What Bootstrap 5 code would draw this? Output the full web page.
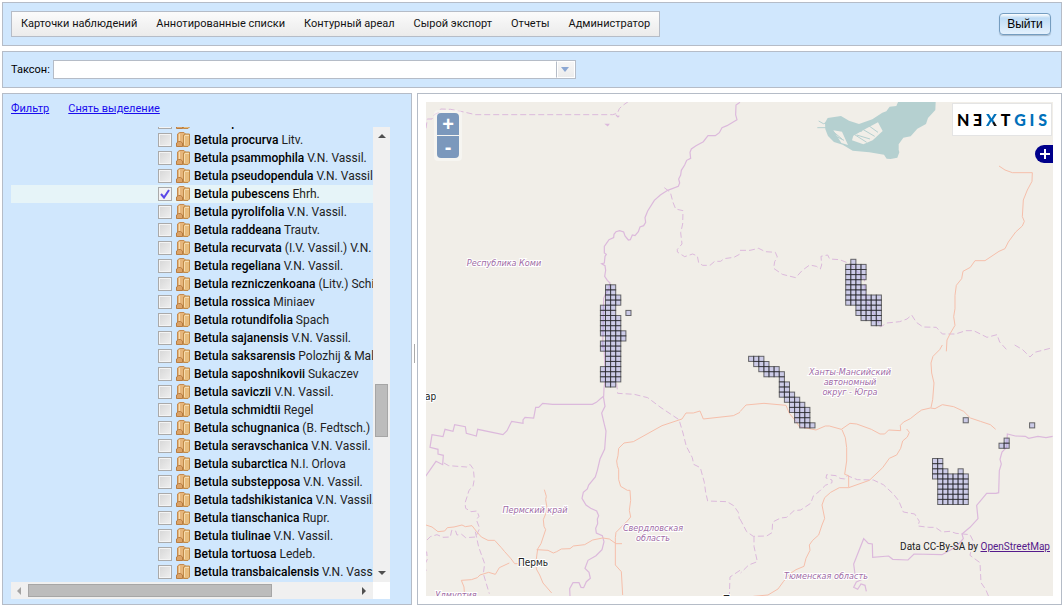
<!DOCTYPE html>
<html lang="ru">
<head>
<meta charset="utf-8">
<meta name="viewport" content="width=device-width, initial-scale=1">
<title>Карточки наблюдений</title>
<link href="https://cdn.jsdelivr.net/npm/bootstrap@5.3.0/dist/css/bootstrap.min.css" rel="stylesheet">
<style>
  :root { --line: #b5bcc7; --panel: #d0e7fd; }
  body { font: 12px/18px Roboto, "Liberation Sans", Arial, sans-serif; color: #000; background: #fff; padding: 2px; gap: 5px; }
  .pane { border: 1px solid var(--line); padding: 8px; background: var(--panel); }
  .menu-bar, .side-links, .taxon-row { font-size: 11px; }
  .menu-bar { border: 1px solid var(--line); height: 26px; background: linear-gradient(#fbfbfb, #ebebeb); padding: 0 1px; }
  .menu-bar a { color: #131313; padding: 3px 8px 3px; margin-right: 3px; text-decoration: none; white-space: nowrap; }
  .menu-bar a:last-child { margin-right: 0; }
  .exit-btn { height: 22px; width: 52px; margin-right: 2px; padding: 0; border: 1px solid #759dc0; border-radius: 4px; background: linear-gradient(#fff 0, #bfdcf5 4px, #e4f1fd 100%); box-shadow: 0 1px 1px rgba(0,0,0,.2); font-family: "Liberation Sans", Arial, sans-serif; line-height: 18px; color: #000; }
  .taxon-row { gap: 3px; }
  .taxon-box { width: 523px; height: 19px; border: 1px solid var(--line); background: #fff; }
  .taxon-box input { border: 0; outline: 0; padding: 0 3px; min-width: 0; background: none; }
  .taxon-box button { width: 19px; border: 1px solid #fff; border-left: 1px solid var(--line); padding: 0; background: linear-gradient(#f6f6f6, #ececec); box-shadow: inset 1px 0 #fff; }
  .side { width: 410px; padding-bottom: 5px; }
  .side a { color: #1a0dee; }
  .side-links { line-height: 14px; gap: 19px; }
  .tree-box { margin-top: 11px; width: 379px; display: grid; grid-template: minmax(0, 1fr) 17px / minmax(0, 1fr) 17px; min-height: 300px; height: 0; }
  .tree { overflow: hidden; }
  .tree ul { margin: -14px 0 0; }
  .tree li { height: 18px; padding-left: 147px; white-space: nowrap; }
  .tree li.chosen { background: #e6f4f8; }
  .tree label { color: #222; margin-left: 4px; }
  .tree b { color: #000; font-weight: 500; }
  .tree input { appearance: none; margin: 2px 4px 2px 0; width: 14px; height: 14px; flex: none; border: 1px solid #aaa; box-shadow: inset 0 0 0 1px #f4f4f4; background: linear-gradient(135deg, #d6d6d6, #f0f0f0); }
  .tree input:checked { background: url("data:image/svg+xml,%3Csvg xmlns='http://www.w3.org/2000/svg' viewBox='0 0 12 12'%3E%3Cpath d='M2 6l3 3.5L10 2' fill='none' stroke='%235a48e8' stroke-width='2'/%3E%3C/svg%3E") center/12px #f2f2f2; }
  .tree svg { width: 14px; height: 16px; flex: none; }
  .bar { background: #f0f0f0; }
  .bar svg { width: 17px; height: 17px; flex: none; }
  .thumb { background: #bcbcbc; border: 1px solid #a6a6a6; }
  .thumb-v { width: 13px; height: 53px; }
  .thumb-h { height: 13px; width: 244px; }
  .grip { width: 1px; height: 19px; background: #aaa; }
  .split { width: 5px; padding-top: 8px; }
  .map-pane { background: #fff; min-width: 400px; }
  .map-view { background: #f1eee8; overflow: hidden; min-height: 300px; }
  .map-view > svg { position: absolute; width: 100%; height: 100%; }
  .border-line { fill: none; stroke: #dcb9dc; stroke-width: 1.2; }
  .dashed { stroke-dasharray: 6 3; stroke-width: 1; }
  .road { fill: none; stroke: #f6bfab; stroke-width: 1; }
  .map-view path { vector-effect: non-scaling-stroke; }
  .cell { fill: rgba(150,150,230,.4); stroke: #222; stroke-opacity: .65; }
  .region, .town { font: oblique 9px "DejaVu Sans Condensed", "DejaVu Sans", sans-serif; text-anchor: middle; fill: #a06ba5; stroke: #fff; stroke-width: 2px; paint-order: stroke; }
  .town { font-style: normal; font-size: 10px; fill: #222; }
  .zoom-box { position: absolute; left: 8px; top: 8px; padding: 3px; background: rgba(255,255,255,.4); border-radius: 4px; }
  .zoom-box button { display: block; width: 22px; height: 22px; border: 0; padding: 0; color: #fff; background: #7b98bc; font: bold 20px/20px "Liberation Sans", sans-serif; border-radius: 4px 4px 0 0; }
  .zoom-box button + button { margin-top: 1px; border-radius: 0 0 4px 4px; }
  .logo-box { position: absolute; right: 1px; top: 1px; width: 100px; height: 33px; padding: 0 4px; background: #fff; border: 1px solid #e4e4e4; font: 900 16px/32px Lato, sans-serif; }
  .logo-box .blue { color: #0070ba; }
  .logo-box .duo { background: linear-gradient(135deg, #0070ba 60%, #111 60%); background-clip: text; -webkit-background-clip: text; color: transparent; }
  .layers-btn { position: absolute; right: 0; top: 43px; width: 18px; height: 18px; border: 0; padding: 0; background: #00008b; border-radius: 9px 0 0 9px; }
  .layers-btn svg { display: block; }
  .credit { position: absolute; right: 3px; bottom: 40px; font-size: 10px; line-height: 18px; color: #222; }
  .credit a { color: #551a8b; }
</style>
</head>
<body class="d-flex flex-column min-vh-100">

<header class="pane d-flex justify-content-between align-items-center">
  <nav class="menu-bar d-flex align-items-center">
    <a href="#">Карточки наблюдений</a><a href="#">Аннотированные списки</a><a href="#">Контурный ареал</a><a href="#">Сырой экспорт</a><a href="#">Отчеты</a><a href="#">Администратор</a>
  </nav>
  <button type="button" class="exit-btn">Выйти</button>
</header>

<section class="pane taxon-row d-flex align-items-center">
  <label for="taxon">Таксон:</label>
  <div class="taxon-box d-flex">
    <input id="taxon" type="text" class="flex-grow-1">
    <button type="button" aria-label="Открыть список"><svg class="d-block mx-auto" width="8" height="5"><path d="M0 0h8L4 5z" fill="#8ba7d3"/></svg></button>
  </div>
</section>

<main class="d-flex flex-grow-1">
  <aside class="pane side d-flex flex-column flex-shrink-0">
    <div class="side-links d-flex"><a href="#">Фильтр</a><a href="#">Снять выделение</a></div>
    <div class="tree-box flex-grow-1">
      <div class="tree"><ul class="list-unstyled" id="tree"></ul></div>
      <div class="bar d-flex flex-column align-items-center">
        <svg><path d="M5 11l4-4 4 4z" fill="#505050"/></svg>
        <div style="flex: 240 0 0"></div><div class="thumb thumb-v"></div><div style="flex: 128 0 0"></div>
        <svg><path d="M5 6h8l-4 4z" fill="#505050"/></svg>
      </div>
      <div class="bar d-flex align-items-center">
        <svg><path d="M10 5v8L6 9z" fill="#a3a3a3"/></svg>
        <div class="thumb thumb-h"></div>
        <svg class="ms-auto"><path d="M6 5v8l4-4z" fill="#505050"/></svg>
      </div>
      <div class="bg-white"></div>
    </div>
  </aside>

  <div class="split d-flex align-items-center justify-content-center"><div class="grip"></div></div>

  <section class="pane map-pane d-flex flex-grow-1">
    <div class="map-view position-relative flex-grow-1">
      <svg viewBox="426 102 627 494" preserveAspectRatio="xMidYMid slice" role="img" aria-label="Карта">
        <!-- north-west -->
        <g transform="translate(420 95) scale(.33333)">
          <path class="border-line dashed" d="M18 100l4-28 14 0 8-14 10-4 8-12 30 1 40 8 34 8h412l14-4 6-14 8-8 20-14 24-16"/>
          <path class="border-line" d="M960 22l-12 8-1 30 4 14-30 18-15 6-8 15-12 9h-22l-14 18-22 12-14 10-4 10 2 18-12 6-6 14-10 16-2 14-6 12 3 12-4 10-32 12-22 14-18 16-20 32-8 20 2 14-6 10-11 4-5 14-10 12-8-2-6 14-6 1-10-12-4-12-12-4-11 3-6 8-1 10-14 6-14 20 0 20 6 4-4 6-2 20-8 2 10 6 2 14-3 18 8 12 8 8-3 16-10 16-6 14-3 150"/>
          <path class="border-line dashed" d="M733 278l18 14 8 30 8 20 22 5-1 40-6 26 4 34-14 16 0 8 22 14 24-8 14 6 4 20 12 8 22 0 14-12h18l10-8 30-4 18-10"/>
          <path class="border-line" d="M558 88h8l-3 4zM588 60l6 6 4-4"/>
        </g>
        <!-- north-east -->
        <g transform="translate(740 95) scale(.33333)">
          <path d="M470 21h117l-1 24-22 24-6 18-26 14-20 23-22 4-14 20 0 16 2 8-6 16-20 4-12-1-8-12-44-7-50-5-30-18-26-8-18-18-8-20-1-20 8-14 40-6 24 14 30 10 40-14 30-20 12-4 10-14 20-2 6-14 10-14-3-14 14-10z" fill="#b5d0d0"/>
          <path d="M340 122l40-22 34-18 14 26-30 28-28 12-34-12zM280 106l26 4 18 40-20-6z" fill="#f1eee8"/>
          <path d="M232 98h30l20 14 24 20M236 78l14 8 24-6 14 16M262 82l10 34 40 20M290 94l28 4 14 14 34-4M350 120l40 12M370 104l34 20M386 92l28 20M330 110l50 32" fill="none" stroke="#b5d0d0"/>
          <path class="border-line dashed" d="M0 466h30l26-6 20 10 30 2 6 14-8 14-3 20 26 18 40 10 20-22 22-16 20 4 12 8 4-12-2-26 20-4 6 12 30 2 30 12 44 46 4 60 34 60 10 24 20-12 38-4 22-8 14-12 14 22 20 14 40 1 18 20h40l30-10 24 0 40 20 30-8 8 22 20 22"/>
          <path class="road" d="M777 213l18 12 22 8h60l-1 26-14 26-12 30-3 50 6 14-6 14-20 18-22 30-10 20-18 8-42 28h-30l-14 20-22 12-4 22-16 20-4 30v40l-4 24 4 26-14 24-10 20-2 34"/>
        </g>
        <!-- south-west -->
        <g transform="translate(420 345) scale(.33333)">
          <path class="border-line" d="M552 0l4 100-4 30-1 24-8 6-14 12-12 6H398l-30-3-12 12h-9l-6 32-26-2-6 8v10l-34-6-14 28-12 12-76-16-4 20-30-8-3-20-32-6-5 20-24-6-6 22-33-6-6 38 24 6v14l16 4-2 28-20-10-32 46"/>
          <path class="border-line dashed" d="M72 354l14 8 54 4 10-8 10 14 3 30-4 22-12 12-6 20-6 18 2 16 16 10 18-2 6 16-8 10 10 26-12 26-30 2-12-10-14 2-4-12-12-2-4 20-22 1-18-8-20 6-16 16-3 22 8 8 2 22-8 16 4 18-14 20-8 6M166 560l10 46 18 50-4 30 18 60"/>
          <path class="border-line" d="M550 154l5 30-10 20 8 34 5 20-4 54-14 30-8 34-6 20-20 24-4 12-12 10-4 18 12 20 14 10 18 8 6 14-4 10 1 14-6 14 2 14 18 8 5 18-6 24-18 18-24 14-9 24 12 12 4 18-12 10-8 18-8-1-6-14-18 0-10 18 2 46"/>
          <path class="border-line dashed" d="M590 115l3 30 50 3 40 10 40 30 54 36 12 40 10 40 18 34 4 20 20 10 12 44 4 30 6 26 58 2 20 12 14 20 3 20M960 676l-30 20-2 56"/>
          <path class="road" d="M18 540l18 6 18 14 20-2 8-10 20-2 24-6 10 5 20-3 14 18 14 16 20 10h20l20 22 10 12 18 20 12 16h20M268 654l-30 14-12 20-20-6-26 8-8 8-18 6-30 2 8 20 2 30M373 434l6 20-2 10 5 30-12 30 2 20 5 10-14 42-10 16-4 30 0 30 10 18 10 24 26 30M350 614l34 2 16 8 10-4 14-8 26-1 10-8 34-4 24-14 30-6 20 3 20 14 18 0M960 202l-20 10-90 10-10-24-20 6-22 0-12 18-60 20-86 48-28 4-16 16-2 22-4 16 2 14 4 12 0 30 6 20 20 12h8l2 30-4 30 4 20-10 12-34 34-2 16v82l18 20 4 70"/>
        </g>
        <!-- south-east -->
        <g transform="translate(740 345) scale(.33333)">
          <path class="border-line dashed" d="M824 0l24 14 22 22 14-14 54-14M0 522l20 38 20 14 40-1 16-10 2-32 24-12 18-2 22-20 20-2 30-20 8-22 18-14 18-18 20-8 0-8-18-6 2-10 28 3 12 8 14 2 8-10 30 12 48 1 30 14 30 28 16 20 14 34 34 6 14 22-4 14 32 4h20l20 14 24-2 18 6 42 4 10 20-4 12-6 30 30 22 3 60 14 20 10 24 50 6M42 574l0 30 10 46-26 10-24 24"/>
          <path class="border-line" d="M938 274l-20 4-24-4-28 6-10-6-30-1-24-6-2 40-14 14-6 22 4 14-6 20-2 66-8 2-28 0-30 36 4 40-24 26-24 20 4 14-14 16-14 12-36 20-84-2-18 18-46-2-12-10-48 4-1-40-12-2-14-14-30 76 4 30 14 4 4 14-14 6-8 16 12 6 10-16 12 4 4 18"/>
          <path class="road" d="M0 200l18-20 54-5 66 6 10 24 20 24 10 16 30 6 20 4 28-12h12l36 10 26-18 20 2 44 16 26 14h14l12-12 36 2-1-16 10-10 20-10 20-16 14-10 26-6 14 2 22-12 34 6 30 14 20 20 30 10 30 10 16 14M607 0l-8 14-20 20-6 20 2 30 7 30-4 50-5 24M500 252l8 10-6 14-14 12-6 22-12 20-22 10-20 28-40 38-62 22-28 0-26 14-18 16-8 22 8 40-8 20-10 30-18 16-10 14 2 16-12 24-6 24-24 10-18 12-20 24-16 22-30 18-44 4M306 254l10 24 4 30v40l-6 40 12 4v35"/>
        </g>
        <g id="cells"></g>
        <g class="region" lang="ru">
          <text x="504" y="266">Республика Коми</text>
          <text x="850" y="375">Ханты-Мансийский</text>
          <text x="850" y="385">автономный</text>
          <text x="850" y="395">округ - Югра</text>
          <text x="535" y="513">Пермский край</text>
          <text x="653" y="531">Свердловская</text>
          <text x="653" y="541">область</text>
          <text x="826" y="579">Тюменская область</text>
          <text x="456" y="598">Удмуртия</text>
        </g>
        <text class="town" x="533" y="566">Пермь</text>
        <text class="town" x="428" y="400">кар</text>
        <text class="town" x="742" y="603">Тюмень</text>
      </svg>
      <div class="zoom-box"><button type="button">+</button><button type="button">-</button></div>
      <div class="logo-box d-flex justify-content-between"><span>N</span><span>Ǝ</span><span class="duo">X</span><span>T</span><span class="blue">G</span><span class="blue">I</span><span class="blue">S</span></div>
      <button type="button" class="layers-btn" aria-label="Слои"><svg width="18" height="18"><path d="M5 9h10M10 4v10" stroke="#fff" stroke-width="2"/></svg></button>
      <div class="credit">Data CC-By-SA by <a href="#">OpenStreetMap</a></div>
    </div>
  </section>
</main>

<script src="https://cdn.jsdelivr.net/npm/bootstrap@5.3.0/dist/js/bootstrap.bundle.min.js"></script>
<script>
  const species = [
    ["potaninii", "Batalin"], ["procurva", "Litv."], ["psammophila", "V.N. Vassil."], ["pseudopendula", "V.N. Vassil."],
    ["pubescens", "Ehrh."], ["pyrolifolia", "V.N. Vassil."], ["raddeana", "Trautv."], ["recurvata", "(I.V. Vassil.) V.N. Vassil."],
    ["regeliana", "V.N. Vassil."], ["rezniczenkoana", "(Litv.) Schischk."], ["rossica", "Miniaev"], ["rotundifolia", "Spach"],
    ["sajanensis", "V.N. Vassil."], ["saksarensis", "Polozhij & Malzeva"], ["saposhnikovii", "Sukaczev"], ["saviczii", "V.N. Vassil."],
    ["schmidtii", "Regel"], ["schugnanica", "(B. Fedtsch.) Litv."], ["seravschanica", "V.N. Vassil."], ["subarctica", "N.I. Orlova"],
    ["substepposa", "V.N. Vassil."], ["tadshikistanica", "V.N. Vassil."], ["tianschanica", "Rupr."], ["tiulinae", "V.N. Vassil."],
    ["tortuosa", "Ledeb."], ["transbaicalensis", "V.N. Vassil."]
  ];
  const folder = `<svg viewBox="0 0 14 16" aria-hidden="true">
    <path d="M1.500 2l2-1.500H8l1 1V14H1.500z" fill="#e6b67c" stroke="#c48a50"/>
    <path d="M.5 14.500V11l2-1.500h2L6.500 11v3.500z" fill="#dba368" stroke="#b87d42"/>
    <path d="M7.500 3l1.500-1h4.500v11L12 14.500H7.500z" fill="#e8bd7e" stroke="#c08a48"/>
    <path d="M9 3.500h4M8.500 4v9M3.500 2v7" stroke="#f6dcb0"/></svg>`;
  document.getElementById("tree").innerHTML = species.map(([name, author]) => {
    const on = name === "pubescens";
    return `<li class="d-flex align-items-center${on ? " chosen" : ""}"><input type="checkbox" id="t-${name}"${on ? " checked" : ""}>${folder}<label for="t-${name}"><b>Betula ${name}</b> ${author}</label></li>`;
  }).join("");

  // Occurrence grid: [row, first column, last column]
  const runs = [
    [0,1,2],[1,1,2],[2,1,3],[3,1,3],[4,0,2],[5,0,2],[5,5,5],[6,0,3],[7,0,3],[8,0,3],[9,0,4],[10,1,4],[11,0,3],[12,0,3],
    [13,1,3],[14,1,3],[15,1,3],[16,0,3],[17,0,3],[18,0,3],[19,1,2],
    [-5,49,49],[-4,48,51],[-3,48,51],[-2,48,51],[-1,48,50],[0,48,51],[1,48,51],[2,48,54],[3,48,54],[4,50,54],[5,50,54],[6,51,54],[7,53,54],
    [14,29,31],[15,30,32],[16,31,34],[17,32,35],[18,35,35],[19,35,36],[20,35,36],[21,35,37],[22,36,38],[23,37,39],[24,37,40],[25,38,40],[26,38,40],[27,39,41],
    [34,65,66],[35,65,66],[36,65,67],[36,70,70],[37,65,71],[38,66,71],[39,66,71],[40,66,71],[41,66,71],[42,66,71],
    [26,71,71],[27,84,84],[30,79,79],[31,78,79]
  ];
  const step = 5.11;
  document.getElementById("cells").innerHTML = runs.flatMap(([row, from, to]) =>
    Array.from({ length: to - from + 1 }, (_, i) =>
      `<rect class="cell" x="${(600.4 + (from + i) * step).toFixed(1)}" y="${(284.8 + row * step).toFixed(1)}" width="5.1" height="5.1"/>`)
  ).join("");
</script>
</body>
</html>
